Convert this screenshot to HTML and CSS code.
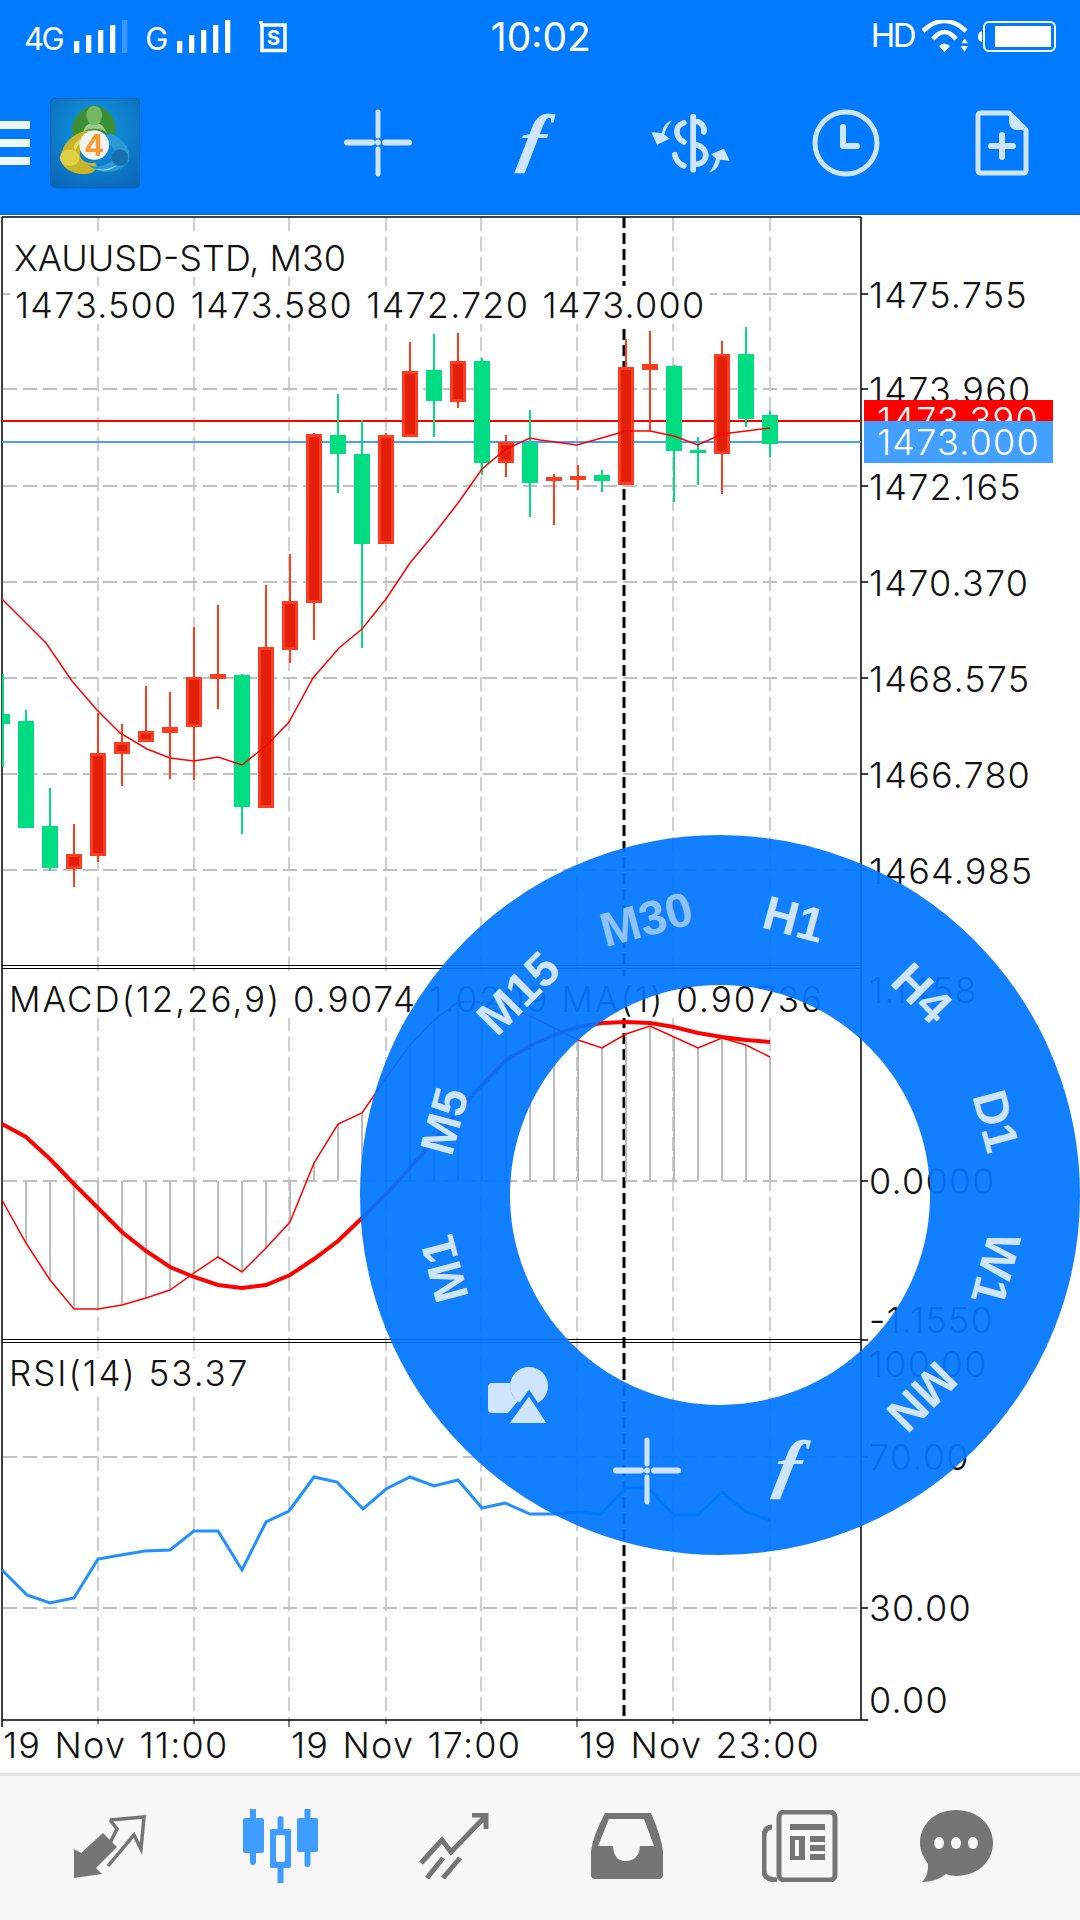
FILE: index.html
```html
<!DOCTYPE html>
<html>
<head>
    <meta charset="UTF-8">
    <title>MT4 chart</title>
    <link rel="stylesheet" href="styles.css">
</head>
<body>
<div id="page">
    <!-- shared icons -->
    <svg class="defs" width="0" height="0">
        <symbol id="i-cross" viewBox="0 0 68 68">
            <path d="M3 33.500H28M41 33.500H65" stroke-width="6"/>
            <path d="M34 3V27M34 40V65" stroke-width="5"/>
            <circle cx="34" cy="33.500" r="3" class="dot"/>
        </symbol>
    </svg>

    <div id="header">
        <div class="status">
            <span class="net">4G</span>
            <svg class="bars" width="54" height="33" viewBox="0 0 54 33">
                <path d="M0 21h5.300v12H0zM12 15h5.300v18H12zM24 10h5.300v23H24zM36 5h5.300v28H36z" fill="#fff"/>
                <path d="M48 0h5.300v33H48z" fill="#fff" opacity=".22"/>
            </svg>
            <span class="net net-g">G</span>
            <svg class="bars bars-g" width="54" height="33" viewBox="0 0 54 33">
                <path d="M0 21h5.300v12H0zM12 15h5.300v18H12zM24 10h5.300v23H24zM36 5h5.300v28H36zM48 0h5.300v33H48z" fill="#fff"/>
            </svg>
            <svg class="sim" width="28" height="32" viewBox="0 0 28 32">
                <path d="M2 3V0M1 4H26V29.500H3V3" fill="none" stroke="#fff" stroke-width="3.500"/>
                <text x="14.500" y="23.500" class="sim-s">S</text>
            </svg>
            <span class="clock">10:02</span>
            <span class="net hd">HD</span>
            <svg class="wifi" width="46" height="33" viewBox="0 0 46 33">
                <path d="M1 11Q22 -9 44 11M11 19Q22.500 5 34 19" fill="none" stroke="#fff" stroke-width="4.500"/>
                <path d="M17 26Q22 21 28 26L22.500 32zM39.300 23.300H46L42.700 18.300zM38.700 26H46L42.300 31.700z" fill="#fff"/>
            </svg>
            <svg class="batt" width="78" height="31" viewBox="0 0 78 31">
                <path d="M4 10Q0 11 0 15.500Q0 20 4 21z" fill="#fff"/>
                <rect x="6" y="1" width="71" height="29" rx="5" fill="none" stroke="#fff" stroke-width="2"/>
                <rect x="17" y="5" width="56" height="21" fill="#fff"/>
            </svg>
        </div>
        <div class="toolbar">
            <div class="burger"><i></i><i></i><i></i></div>
            <svg class="logo" width="92" height="92" viewBox="0 0 92 92">
                <defs>
                    <radialGradient id="logo-bg" cx=".5" cy=".35" r=".8">
                        <stop offset="0" stop-color="#129ae6"/>
                        <stop offset="1" stop-color="#0a64b4"/>
                    </radialGradient>
                </defs>
                <rect x=".5" y=".5" width="91" height="91" rx="5" fill="url(#logo-bg)" stroke="#0b60ad"/>
                <path d="M23 38C20 22 33 8 45 8C58 8 70 22 66 38L54 36C50 33 40 33 36 36z" fill="#3d8f35"/>
                <path d="M33 36C36 30 54 30 58 36C54 28 52 26 45 26C38 26 36 28 33 36z" fill="#9ccb8c"/>
                <ellipse cx="45" cy="18" rx="8" ry="10" fill="#74b765"/>
                <path d="M40 33C24 35 13 46 11 60C10 72 26 80 40 77C47 75 49 70 46 66C36 68 28 62 31 54C33 48 38 45 42 42z" fill="#c8b428"/>
                <path d="M34 40C26 44 22 50 26 54C28 48 32 44 37 42z" fill="#e6d95a"/>
                <ellipse cx="20" cy="61" rx="10" ry="8.500" fill="#e0d045"/>
                <path d="M60 36C73 40 84 52 80 64C73 76 54 80 38 68C50 72 62 68 66 60C68 54 62 46 56 46z" fill="#2b9ad6"/>
                <path d="M44 72C54 74 64 72 70 66C64 74 54 76 44 72z" fill="#8fd0f0"/>
                <circle cx="71" cy="61" r="8.500" fill="#166fae"/>
                <circle cx="45" cy="48" r="15" fill="#f3f3f3"/>
                <text x="45" y="59" class="logo-4">4</text>
            </svg>
            <div class="tools">
                <svg class="tool" width="68" height="68"><use href="#i-cross"/></svg>
                <span class="fn">ƒ</span>
                <svg class="tool tool-fill" width="87" height="64" viewBox="20 30 260 190">
                    <path class="s17" d="M158 46V205M165 60C185 62 192 78 190 92M130 65C100 75 105 110 130 122M168 130C205 140 205 185 168 188M103 160C105 175 118 190 130 193"/>
                    <path d="M95 58C78 62 68 75 65 95L33 93L50 130L88 112L72 100C75 85 83 70 95 58zM205 213C225 208 235 195 238 175L267 178L250 142L212 158L226 172C223 187 216 202 205 213z"/>
                </svg>
                <svg class="tool" width="68" height="68" viewBox="0 0 68 68">
                    <circle cx="34" cy="34" r="31" stroke-width="5"/>
                    <path d="M31 18V37H45" stroke-width="6"/>
                </svg>
                <svg class="tool" width="54" height="66" viewBox="0 0 54 66">
                    <path d="M6 3H34L51 20V60Q51 63 48 63H6Q3 63 3 60V6Q3 3 6 3z" stroke-width="5"/>
                    <path class="solid" d="M34 3L52 20H42Q35 20 34 12z"/>
                    <path d="M16 36H38M27 25V47" stroke-width="6"/>
                </svg>
            </div>
        </div>
    </div>

    <svg id="chart" width="1080" height="1558" viewBox="0 215 1080 1558">
        <!-- grid -->
        <path class="grid" d="M98 217V1720M194 217V1720M289 217V1720M386 217V1720M481 217V1720M577 217V1720M673 217V1720M770 217V1720"/>
        <path class="grid gridh" d="M3 294H861M3 389H861M3 486H861M3 582H861M3 678H861M3 774H861M3 870H861M3 1181H861M3 1457H861M3 1608H861"/>
        <path class="cross" d="M624 217V1720"/>

        <!-- text sits on white -->
        <rect class="paper" x="10" y="236" width="340" height="40"/>
        <rect class="paper" x="10" y="286" width="700" height="38"/>
        <rect class="paper" x="6" y="976" width="900" height="42"/>
        <rect class="paper" x="6" y="1358" width="246" height="36"/>

        <!-- frame -->
        <path class="frame" d="M2 217V1727M2 217H861M861 217V1720M2 1720H861"/>
        <path class="frame thin" d="M2 965.500H861M2 968.500H861M2 1339.500H861M2 1342.500H861"/>
        <path class="frame" d="M861 294h7M861 389h7M861 486h7M861 582h7M861 678h7M861 774h7M861 870h7M861 1181h7M861 1340h7M861 1457h7M861 1608h7M861 1720h7"/>
        <path class="frame thin" d="M98 1720v4M194 1720v4M289 1720v7M386 1720v4M481 1720v4M577 1720v7M673 1720v4M770 1720v4"/>

        <!-- price lines -->
        <path class="bid" d="M2 421H861"/>
        <path class="ask" d="M2 442H861"/>

        <!-- candles -->
        <path class="wick up" d="M770 411V457M746 327V427M698 437V485M674 365V502M602 470V492M530 410V517M482 358V475M434 334V437M362 420V648M338 394V493M242 674V834M50 788V871M26 710V721M3 674V767"/>
        <path class="wick down" d="M722 341V494M650 331V431M626 339V485M578 465V490M554 474V525M506 435V477M458 333V408M410 342V371M386 433V435M314 433V640M290 554V663M266 585V647M218 605V709M194 627V780M170 692V779M146 686V731M122 724V786M98 713V862M74 824V887"/>
        <path class="body up" d="M762 415h16v29h-16zM738 354h16v65h-16zM690 450h16v3h-16zM666 366h16v85h-16zM594 475h16v6h-16zM522 443h16v40h-16zM474 361h16v102h-16zM426 370h16v31h-16zM354 454h16v90h-16zM330 435h16v19h-16zM234 675h16v132h-16zM42 826h16v42h-16zM18 721h16v107h-16zM2 714h8v10H2z"/>
        <g class="body down">
            <rect x="715.500" y="355.500" width="13" height="97"/>
            <rect x="643.500" y="365.500" width="13" height="3"/>
            <rect x="619.500" y="368.500" width="13" height="115"/>
            <rect x="571.500" y="477.500" width="13" height="1"/>
            <rect x="547.500" y="478.500" width="13" height="1"/>
            <rect x="499.500" y="443.500" width="13" height="18"/>
            <rect x="451.500" y="362.500" width="13" height="38"/>
            <rect x="403.500" y="372.500" width="13" height="63"/>
            <rect x="379.500" y="436.500" width="13" height="106"/>
            <rect x="307.500" y="435.500" width="13" height="166"/>
            <rect x="283.500" y="602.500" width="13" height="46"/>
            <rect x="259.500" y="648.500" width="13" height="158"/>
            <rect x="211.500" y="675.500" width="13" height="2"/>
            <rect x="187.500" y="678.500" width="13" height="47"/>
            <rect x="163.500" y="728.500" width="13" height="3"/>
            <rect x="139.500" y="732.500" width="13" height="8"/>
            <rect x="115.500" y="743.500" width="13" height="9"/>
            <rect x="91.500" y="754.500" width="13" height="100"/>
            <rect x="67.500" y="855.500" width="13" height="12"/>
        </g>
        <polyline class="line" points="2,599 24,621 46,643 72,681 96,709 120,733 147,749 170,758 194,761 218,757 242,765 267,745 289,722 313,678 339,648 362,629 386,599 410,563 434,534 458,503 482,469 506,449 530,438 540,440 577,445 626,431 650,431 674,436 698,445 722,434 746,431 770,428"/>

        <!-- macd -->
        <path class="hist" d="M26 1181V1243M50 1181V1280M74 1181V1309M98 1181V1309M122 1181V1305M146 1181V1298M170 1181V1290M194 1181V1273M218 1181V1257M242 1181V1272M266 1181V1248M290 1181V1222M314 1181V1163M338 1181V1124M362 1181V1113M386 1181V1078M410 1181V1045M434 1181V1020M458 1181V1002M482 1181V1002M506 1181V1006M530 1181V1016M554 1181V1028M578 1181V1040M602 1181V1048M626 1181V1034M650 1181V1026M674 1181V1037M698 1181V1048M722 1181V1038M746 1181V1045M770 1181V1057"/>
        <polyline class="line" points="2,1200 26,1243 50,1280 74,1309 98,1309 122,1305 146,1298 170,1290 194,1273 218,1257 242,1272 266,1248 290,1222 314,1163 338,1124 362,1113 386,1078 410,1045 434,1020 458,1002 482,1002 506,1006 530,1016 554,1028 578,1040 602,1048 626,1034 650,1026 674,1037 698,1048 722,1038 746,1045 770,1057"/>
        <polyline class="line line-b" points="2,1124 26,1137 50,1159 74,1184 98,1208 122,1232 146,1251 170,1267 194,1277 218,1285 242,1288 266,1285 290,1275 314,1259 338,1241 362,1218 386,1194 410,1168 434,1140 458,1112 482,1085 506,1060 530,1046 554,1035 578,1027 602,1023 626,1022 650,1023 674,1027 698,1033 722,1037 746,1040 770,1042"/>

        <!-- rsi -->
        <polyline class="rsi" points="2,1570 27,1595 50,1603 74,1598 98,1559 121,1555 145,1551 170,1550 194,1531 218,1531 242,1570 266,1522 289,1511 314,1477 337,1482 363,1509 386,1489 410,1477 434,1486 458,1480 482,1508 505,1503 530,1514 554,1514 578,1512 601,1514 626,1488 648,1488 674,1515 698,1515 722,1492 746,1512 770,1520"/>

        <!-- labels -->
        <text class="t title" x="14" y="271">XAUUSD-STD, M30</text>
        <text class="t" x="15" y="318">1473.500 1473.580 1472.720 1473.000</text>
        <text class="t sub" x="9" y="1012">MACD(12,26,9) 0.9074 1.0209 MA(1) 0.90736</text>
        <text class="t sub" x="9" y="1386">RSI(14) 53.37</text>

        <text class="t" x="869" y="308">1475.755</text>
        <text class="t" x="869" y="403">1473.960</text>
        <text class="t" x="869" y="500">1472.165</text>
        <text class="t" x="869" y="596">1470.370</text>
        <text class="t" x="869" y="692">1468.575</text>
        <text class="t" x="869" y="788">1466.780</text>
        <text class="t" x="869" y="884">1464.985</text>
        <text class="t" x="869" y="1003">1.1458</text>
        <text class="t" x="869" y="1194">0.0000</text>
        <text class="t" x="869" y="1333">-1.1550</text>
        <text class="t" x="869" y="1377">100.00</text>
        <text class="t" x="869" y="1470">70.00</text>
        <text class="t" x="869" y="1621">30.00</text>
        <text class="t" x="869" y="1713">0.00</text>

        <rect x="864" y="400" width="189" height="22" fill="#f00"/>
        <text class="t white" x="877" y="433">1473.390</text>
        <rect x="864" y="421" width="189" height="42" fill="#44a0ff"/>
        <text class="t white" x="877" y="455">1473.000</text>

        <text class="t" x="3" y="1758">19 Nov 11:00</text>
        <text class="t" x="291" y="1758">19 Nov 17:00</text>
        <text class="t" x="579" y="1758">19 Nov 23:00</text>
    </svg>

    <div id="tabbar">
        <div class="tab">
            <svg width="72" height="63" viewBox="0 0 72 63">
                <path class="fill" d="M0 34L7 38L29 18L43 32L22 53L28 59L0 63z"/>
                <path class="out" d="M36 5L70 2L67 34L60 20L34 51M36 5L43 14L36 28" stroke-width="3.500"/>
            </svg>
        </div>
        <div class="tab">
            <svg width="76" height="74" viewBox="244 1809 76 74">
                <path class="on" d="M254 1809V1862M281.500 1819V1883M308.500 1809V1864" stroke-width="6"/>
                <rect class="on-fill" x="244" y="1818" width="21" height="35" rx="2"/>
                <rect class="on-fill" x="298" y="1818" width="21" height="34" rx="2"/>
                <rect class="on-fill" x="271" y="1829" width="21" height="39" rx="2"/>
                <rect x="277" y="1835" width="9" height="27" rx="2" fill="#f7f7f7"/>
            </svg>
        </div>
        <div class="tab">
            <svg width="71" height="66" viewBox="418 1812 71 66">
                <path class="out" d="M421 1862L442 1839L451 1851L486 1815M472 1814H486V1828M427 1877L443 1857M443 1877L460 1857" stroke-width="5"/>
            </svg>
        </div>
        <div class="tab">
            <svg width="72" height="66" viewBox="591 1812 72 66">
                <path class="fill" fill-rule="evenodd" d="M605 1812H651Q661 1835 663 1850V1874Q663 1878 659 1878H595Q591 1878 591 1874V1850Q593 1835 605 1812zM609 1818L598 1845H613Q614 1860 625 1860Q639 1860 640 1845H654L644 1818z"/>
            </svg>
        </div>
        <div class="tab">
            <svg width="76" height="72" viewBox="763 1809 76 72">
                <rect class="out" x="780" y="1811" width="56" height="68" rx="5" stroke-width="5"/>
                <path class="out" d="M773 1826Q765 1826 765 1836V1870Q765 1879 778 1879" stroke-width="5"/>
                <path class="fill" d="M791 1823h35v6h-35zM811 1835h15v6h-15zM811 1844h15v6h-15zM811 1853h15v6h-15z"/>
                <path class="fill" fill-rule="evenodd" d="M791 1835h15v24h-15zM796 1839v16h4v-16z"/>
            </svg>
        </div>
        <div class="tab">
            <svg width="74" height="72" viewBox="921 1809 74 72">
                <path class="fill" d="M957 1809C978 1809 994 1823 994 1842C994 1861 978 1875 957 1875C953 1875 950 1874 947 1873C941 1878 932 1881 923 1881C928 1876 929 1871 929 1863C925 1857 921 1850 921 1842C921 1823 936 1809 957 1809z"/>
                <ellipse cx="940" cy="1842" rx="5" ry="6" fill="#f7f7f7"/>
                <ellipse cx="957" cy="1842" rx="5" ry="6" fill="#f7f7f7"/>
                <ellipse cx="974" cy="1842" rx="5" ry="6" fill="#f7f7f7"/>
            </svg>
        </div>
    </div>

    <!-- timeframe wheel -->
    <div id="wheel">
        <span class="item s15 dim">M30</span>
        <span class="item s1">H1</span>
        <span class="item s2">H4</span>
        <span class="item s3">D1</span>
        <span class="item s4">W1</span>
        <span class="item s5">MN</span>
        <span class="item s6 wheel-f">ƒ</span>
        <svg class="item s7x tool" width="68" height="68"><use href="#i-cross"/></svg>
        <svg class="item s8x" width="62" height="58" viewBox="0 0 62 58">
            <circle cx="41" cy="19" r="19" fill="#cfe4ff"/>
            <path d="M4 16H22Q22 30 30 34L20 46H4Q0 46 0 42V20Q0 16 4 16z" fill="#cfe4ff"/>
            <path d="M41 26L62 58H18z" fill="#cfe4ff" stroke="#107fff" stroke-width="4"/>
        </svg>
        <span class="item s9">M1</span>
        <span class="item s10">M5</span>
        <span class="item s11">M15</span>
    </div>
</div>
</body>
</html>
```

FILE: styles.css
```css
html,
body {
    margin: 0;
    padding: 0;
}

#page {
    width: 1080px;
    height: 1920px;
    position: relative;
    overflow: hidden;
    background: #fff;
    font-family: Inter, "Noto Sans", sans-serif;
}

.defs {
    position: absolute;
}

symbol path,
symbol circle {
    fill: none;
    stroke: #cfe4ff;
    stroke-linecap: round;
}

symbol .dot {
    fill: #cfe4ff;
    stroke: none;
}

/* header */
#header {
    height: 213px;
    background: #007bff;
    border-bottom: 2px solid #0a70e6;
    color: #fff;
}

.status {
    height: 72px;
    display: flex;
    align-items: flex-end;
    padding: 0 24px 19px 24px;
    box-sizing: border-box;
}

.net {
    font-size: 31px;
    line-height: 28px;
    letter-spacing: -2.500px;
}

.net-g {
    margin-left: 17px;
}

.bars {
    margin-left: 12px;
}

.bars-g {
    margin-left: 11px;
}

.sim {
    margin-left: 28px;
}

.sim-s {
    font-size: 20px;
    font-weight: 700;
    text-anchor: middle;
    fill: #fff;
}

.clock {
    font-size: 39px;
    line-height: 36px;
    margin-left: 204px;
    margin-bottom: -2px;
}

.hd {
    margin-left: auto;
    font-size: 33px;
    line-height: 32px;
    margin-bottom: 2px;
}

.wifi {
    margin-left: 8px;
}

.batt {
    margin-left: 10px;
    margin-bottom: 1px;
}

.toolbar {
    height: 141px;
    display: flex;
    align-items: center;
}

.burger {
    width: 30px;
    display: flex;
    flex-direction: column;
    gap: 10px;
}

.burger i {
    display: block;
    height: 8px;
    background: #eef6ff;
}

.logo {
    margin-left: 20px;
}

.logo-4 {
    font-size: 30px;
    font-weight: 700;
    fill: #f59a2e;
    text-anchor: middle;
}

.tools {
    margin-left: 160px;
    display: grid;
    grid-template-columns: repeat(5, 156px);
    justify-items: center;
    align-items: center;
}

.tool path,
.tool circle {
    fill: none;
    stroke: #cfe4ff;
    stroke-linecap: round;
    stroke-linejoin: round;
}

.tool .solid,
.tool-fill path {
    fill: #cfe4ff;
    stroke: none;
}

.tool-fill .s17 {
    fill: none;
    stroke: #cfe4ff;
    stroke-width: 17;
}

.fn {
    font-family: "Liberation Serif", serif;
    font-style: italic;
    font-weight: 700;
    font-size: 74px;
    line-height: 68px;
    color: #cfe4ff;
    transform: translateY(-5px) skewX(-12deg);
}

/* chart */
#chart {
    display: block;
}

.grid {
    fill: none;
    stroke: #c0c0c0;
    stroke-width: 1.500;
    stroke-dasharray: 14 6;
}

.gridh {
    stroke-width: 2;
}

.cross {
    fill: none;
    stroke: #000;
    stroke-width: 3;
    stroke-dasharray: 11 5;
}

.paper {
    fill: #fff;
}

.frame {
    fill: none;
    stroke: #000;
    stroke-width: 1.500;
}

.thin {
    stroke-width: 1;
}

.bid {
    stroke: #f00;
    stroke-width: 2;
}

.ask {
    stroke: #44a0ff;
    stroke-width: 2;
}

.wick {
    fill: none;
    stroke-width: 2;
}

.wick.up {
    stroke: #00dc82;
}

.wick.down {
    stroke: #ff3c1e;
}

.body.up {
    fill: #00dc82;
}

.body.down {
    fill: #e2200c;
    stroke: #ff3c1e;
    stroke-width: 3;
}

.line {
    fill: none;
    stroke: #f00;
    stroke-width: 1.500;
}

.line-b {
    stroke-width: 4;
}

.hist {
    fill: none;
    stroke: #bbb;
    stroke-width: 2;
}

.rsi {
    fill: none;
    stroke: #2090ff;
    stroke-width: 3;
}

.t {
    font-size: 36px;
    font-weight: 300;
    letter-spacing: 1.200px;
    word-spacing: 2px;
    fill: #111;
}

.title {
    letter-spacing: 0;
    word-spacing: 0;
}

.sub {
    font-size: 35px;
    letter-spacing: 2px;
    word-spacing: 0;
}

.white {
    fill: #fff;
}

/* bottom tabs */
#tabbar {
    height: 147px;
    box-sizing: border-box;
    border-top: 3px solid #e3e3e3;
    padding: 0 0 4px 25px;
    background: #f7f7f7;
    display: grid;
    grid-template-columns: 170px 172px 172px 176px 170px 144px;
    justify-items: center;
    align-items: center;
}

.tab svg {
    display: block;
}

.fill {
    fill: #757575;
}

.out {
    fill: none;
    stroke: #757575;
}

.on {
    fill: none;
    stroke: #3f9dff;
    stroke-linecap: round;
}

.on-fill {
    fill: #3f9dff;
}

/* wheel */
#wheel {
    position: absolute;
    left: 360px;
    top: 835px;
    width: 720px;
    height: 720px;
    box-sizing: border-box;
    border: 150px solid rgba(0, 117, 255, .93);
    border-radius: 50%;
}

.item {
    position: absolute;
    left: 50%;
    top: 50%;
    font-family: "Liberation Sans", sans-serif;
    font-weight: 700;
    font-size: 48px;
    line-height: 1;
    color: #cfe4ff;
    white-space: nowrap;
    transform: translate(-50%, -50%) rotate(var(--a)) translateY(-285px);
}

.dim { color: #8fc3ff; }
.s15 { --a: -15deg; }
.s1 { --a: 15deg; }
.s2 { --a: 45deg; }
.s3 { --a: 75deg; }
.s4 { --a: 105deg; }
.s5 { --a: 135deg; }
.s6 { --a: 165deg; }
.s9 { --a: 255deg; }
.s10 { --a: 285deg; }
.s11 { --a: 315deg; }

.wheel-f {
    font-family: "Liberation Serif", serif;
    font-style: italic;
    font-weight: 700;
    font-size: 74px;
    transform: translate(-50%, -50%) translate(70px, 269px) skewX(-12deg);
}

.s7x {
    transform: translate(-50%, -50%) translate(-73px, 276px);
}

.s8x {
    transform: translate(-50%, -50%) translate(-201px, 201px);
}
```
